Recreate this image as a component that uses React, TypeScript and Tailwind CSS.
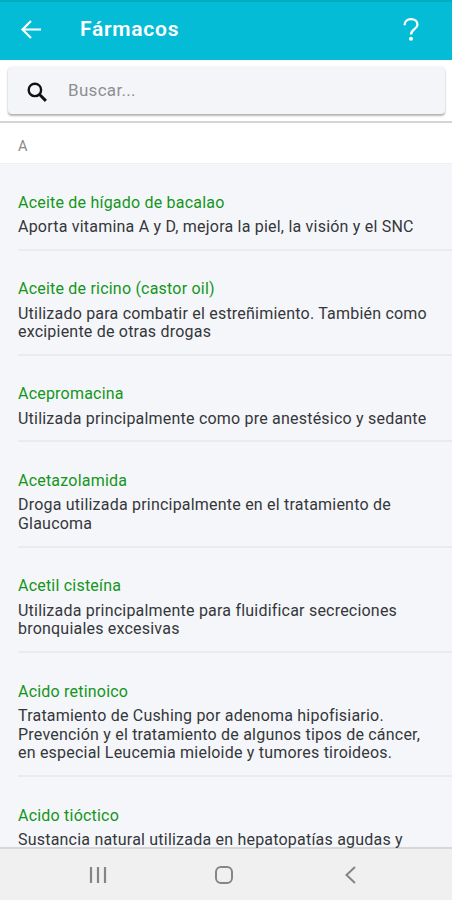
const drugs = [
  { name: "Aceite de hígado de bacalao", text: "Aporta vitamina A y D, mejora la piel, la visión y el SNC" },
  { name: "Aceite de ricino (castor oil)", text: "Utilizado para combatir el estreñimiento. También como\nexcipiente de otras drogas" },
  { name: "Acepromacina", text: "Utilizada principalmente como pre anestésico y sedante" },
  { name: "Acetazolamida", text: "Droga utilizada principalmente en el tratamiento de\nGlaucoma" },
  { name: "Acetil cisteína", text: "Utilizada principalmente para fluidificar secreciones\nbronquiales excesivas" },
  { name: "Acido retinoico", text: "Tratamiento de Cushing por adenoma hipofisiario.\nPrevención y el tratamiento de algunos tipos de cáncer,\nen especial Leucemia mieloide y tumores tiroideos." },
  { name: "Acido tióctico", text: "Sustancia natural utilizada en hepatopatías agudas y" },
];

function Header() {
  return (
    <header className="flex h-[60px] shrink-0 items-center border-t-2 border-[#00acc1] bg-[#05bcd6] pb-1 pl-[19px] pr-[32px] text-white">
      <svg viewBox="0 0 24 24" className="size-6" fill="none" stroke="currentColor" strokeWidth="2.2">
        <path d="M22 12.500H4M12 4 3.500 12.500l8.500 8.500" />
      </svg>
      <h1 className="ml-[37px] text-[21px] font-semibold leading-6 tracking-[0.75px]">Fármacos</h1>
      <svg viewBox="0 0 18 26" className="ml-auto h-[25px] w-[18px]" fill="none" stroke="currentColor" strokeWidth="2.4">
        <path d="M2.300 8.500C2.300 4.500 5 2.300 9 2.300s6.700 2.300 6.700 5.700c0 4.500-6.700 5-6.700 10.300" />
        <circle cx="9" cy="22.700" r="2.100" fill="currentColor" stroke="none" />
      </svg>
    </header>
  );
}

function SearchBar() {
  return (
    <div className="h-[63px] shrink-0 border-b-2 border-[#d5d5d5] bg-white pl-2 pr-[7px] pt-[7px]">
      <div className="flex h-[47px] items-center rounded-sm bg-[#f3f5f9] pl-[19px] shadow-[0_2px_2px_rgba(0,0,0,0.28),0_0_2px_rgba(0,0,0,0.12)]">
        <svg viewBox="0 0 20 20" className="mt-0.5 size-5" fill="none" stroke="#111" strokeWidth="2.400">
          <circle cx="7.900" cy="7.900" r="6.200" />
          <path d="m12.300 12.300 6.600 6.600" strokeWidth="2.900" />
        </svg>
        <span className="ml-[21px] text-[17px] tracking-[0.3px] text-[#8d8f92]">Buscar...</span>
      </div>
    </div>
  );
}

function NavBar() {
  return (
    <nav className="flex h-[53px] shrink-0 items-center border-t-2 border-[#d6d7d9] bg-[#f0f0f0] pl-[88px] pr-[91px] pt-px text-[#858585]">
      <svg viewBox="0 0 20 18" className="h-[18px] w-5" stroke="currentColor" strokeWidth="2.200">
        <path d="M3 1v16M10 1v16M17 1v16" />
      </svg>
      <svg viewBox="0 0 20 20" className="ml-[106px] mr-auto size-5" fill="none" stroke="currentColor" strokeWidth="2">
        <rect x="2" y="2" width="16" height="16" rx="5" />
      </svg>
      <svg viewBox="0 0 20 20" className="size-5" fill="none" stroke="currentColor" strokeWidth="2">
        <path d="m14 2-8.500 8 8.500 8" />
      </svg>
    </nav>
  );
}

export default function App() {
  return (
    <div className="flex h-[900px] w-[452px] flex-col overflow-hidden bg-[#f4f6fa] font-['Roboto',sans-serif]">
      <Header />
      <SearchBar />
      <div className="flex h-[41px] shrink-0 items-center border-b border-[#eeeff1] bg-white pl-[18px] pt-2 text-[14.500px] text-[#8a8a8a]">
        A
      </div>
      <ul className="relative z-10 min-h-0 flex-1 pl-[18px]">
        {drugs.map((drug) => (
          <li key={drug.name} className="border-b-2 border-[#e9ebef] pb-[11.900px] pt-[28.500px] last:border-b-0 last:pb-0">
            <h2 className="text-[16px] leading-5 tracking-[0.210px] text-[#15951b]">{drug.name}</h2>
            <p className="mt-[5.500px] whitespace-pre text-[16px] leading-[18.700px] tracking-[0.210px] text-[#35373a]">{drug.text}</p>
          </li>
        ))}
      </ul>
      <NavBar />
    </div>
  );
}
